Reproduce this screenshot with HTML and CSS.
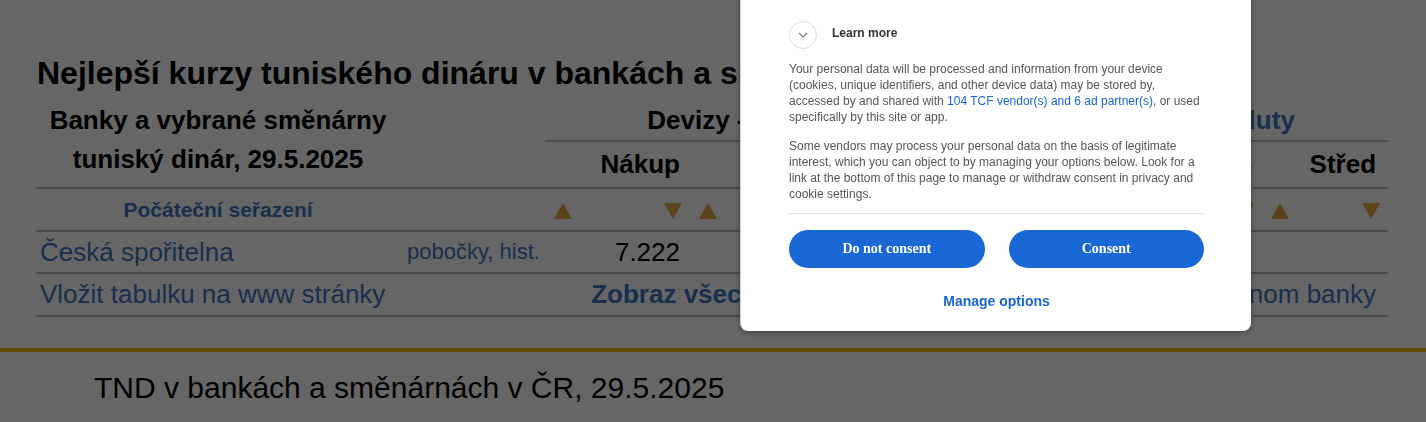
FILE: index.html
```html
<!DOCTYPE html>
<html lang="cs">
<head>
<meta charset="utf-8">
<title>Kurzy tuniského dináru</title>
<link rel="stylesheet" href="styles.css">
</head>
<body>
<main class="page">
  <div class="content">
    <h1 class="title">Nejlepší kurzy tuniského dináru v bankách a směnárnách</h1>
    <table class="rates">
      <colgroup>
        <col class="c-name"><col class="c-links">
        <col class="c-num"><col class="c-num"><col class="c-num"><col class="c-num">
        <col class="c-num5"><col class="c-num6">
      </colgroup>
      <thead>
        <tr class="h1row">
          <th class="bank-head" rowspan="2">Banky a vybrané směnárny<br>tuniský dinár, 29.5.2025</th>
          <th class="blank-head" rowspan="2"></th>
          <th class="group" colspan="4">Devizy - bezhotovostní převod</th>
          <th class="group" colspan="2"><a class="link-bold" href="#">Valuty</a></th>
        </tr>
        <tr class="h2row">
          <th class="num-head">Nákup</th>
          <th class="num-head">Prodej</th>
          <th class="num-head">Střed</th>
          <th class="num-head">Spread</th>
          <th class="num-head">Nákup</th>
          <th class="num-head">Střed</th>
        </tr>
      </thead>
      <tbody>
        <tr class="sort-row">
          <td class="sort-label"><a class="link-bold" href="#">Počáteční seřazení</a></td>
          <td></td>
          <td><div class="sorters"><svg class="tri" viewBox="0 0 18 16"><polygon points="9,0 18,16 0,16"/></svg><svg class="tri" viewBox="0 0 18 16"><polygon points="0,0 18,0 9,16"/></svg></div></td>
          <td><div class="sorters"><svg class="tri" viewBox="0 0 18 16"><polygon points="9,0 18,16 0,16"/></svg><svg class="tri" viewBox="0 0 18 16"><polygon points="0,0 18,0 9,16"/></svg></div></td>
          <td><div class="sorters"><svg class="tri" viewBox="0 0 18 16"><polygon points="9,0 18,16 0,16"/></svg><svg class="tri" viewBox="0 0 18 16"><polygon points="0,0 18,0 9,16"/></svg></div></td>
          <td><div class="sorters"><svg class="tri" viewBox="0 0 18 16"><polygon points="9,0 18,16 0,16"/></svg><svg class="tri" viewBox="0 0 18 16"><polygon points="0,0 18,0 9,16"/></svg></div></td>
          <td><div class="sorters"><svg class="tri" viewBox="0 0 18 16"><polygon points="9,0 18,16 0,16"/></svg><svg class="tri" viewBox="0 0 18 16"><polygon points="0,0 18,0 9,16"/></svg></div></td>
          <td><div class="sorters"><svg class="tri" viewBox="0 0 18 16"><polygon points="9,0 18,16 0,16"/></svg><svg class="tri" viewBox="0 0 18 16"><polygon points="0,0 18,0 9,16"/></svg></div></td>
        </tr>
        <tr class="data-row">
          <td class="bank"><a class="link" href="#">Česká spořitelna</a></td>
          <td class="bank-links"><a class="link" href="#">pobočky</a>, <a class="link" href="#">hist.</a></td>
          <td class="num">7.222</td>
          <td class="num">7.664</td>
          <td class="num">7.443</td>
          <td class="num"></td>
          <td class="num"></td>
          <td class="num"></td>
        </tr>
        <tr class="foot-row">
          <td class="bank" colspan="2"><a class="link" href="#">Vložit tabulku na www stránky</a></td>
          <td class="show-all" colspan="3"><a class="link-bold" href="#">Zobraz všechny směnárny</a></td>
          <td class="by-name" colspan="3"><a class="link" href="#">Seřadit podle jménom banky</a></td>
        </tr>
      </tbody>
    </table>
  </div>
  <hr class="gold">
  <h2 class="subtitle">TND v bankách a směnárnách v ČR, 29.5.2025</h2>
</main>

<div class="overlay"></div>

<section class="consent">
  <div class="learn">
    <span class="chevron"><svg viewBox="0 0 10 6" width="10" height="6"><polyline points="1,1 5,5 9,1"/></svg></span>
    <span class="learn-label">Learn more</span>
  </div>
  <p class="consent-text">Your personal data will be processed and information from your device (cookies, unique identifiers, and other device data) may be stored by, accessed by and shared with <a href="#" class="consent-link">104 TCF vendor(s) and 6 ad partner(s)</a>, or used specifically by this site or app.</p>
  <p class="consent-text second">Some vendors may process your personal data on the basis of legitimate interest, which you can object to by managing your options below. Look for a link at the bottom of this page to manage or withdraw consent in privacy and cookie settings.</p>
  <div class="divider"></div>
  <div class="buttons">
    <button class="btn">Do not consent</button>
    <button class="btn">Consent</button>
  </div>
  <a href="#" class="manage">Manage options</a>
</section>
</body>
</html>
```
FILE: styles.css
```css
html, body {
  margin: 0;
  padding: 0;
  background: #ffffff;
  font-family: "Liberation Sans", Arial, sans-serif;
  color: #000;
  overflow: hidden;
}

.page {
  width: 1426px;
}

.content {
  padding: 0 38px 0 36px;
}

.title {
  margin: 55px 0 0 1px;
  font-size: 32px;
  line-height: 36px;
  font-weight: bold;
  white-space: nowrap;
  height: 45px;
}

a { text-decoration: none; }

.link { color: #3e78c2; }
.link-bold { color: #3e78c2; font-weight: bold; }

.rates {
  width: 1352px;
  table-layout: fixed;
  border-collapse: separate;
  border-spacing: 0;
  font-size: 26px;
}

.c-name { width: 364px; }
.c-links { width: 145px; }
.c-num { width: 145px; }
.c-num5 { width: 137px; }
.c-num6 { width: 126px; }

.rates th, .rates td {
  padding: 0;
  white-space: nowrap;
  overflow: hidden;
}

.rates th {
  font-weight: bold;
}

.h1row th.group {
  height: 40px;
  border-bottom: 2px solid #bbbbbb;
  text-align: center;
  vertical-align: middle;
}

.bank-head {
  line-height: 39px;
  text-align: center;
  vertical-align: middle;
  border-bottom: 2px solid #bbbbbb;
  padding-bottom: 7px !important;
}

.blank-head {
  border-bottom: 2px solid #bbbbbb;
}

.num-head {
  height: 45px;
  text-align: right;
  padding-right: 10px !important;
  border-bottom: 2px solid #bbbbbb;
}

.num-head:last-child {
  padding-right: 12px !important;
}

.sort-row td {
  height: 41px;
  border-bottom: 2px solid #bbbbbb;
  vertical-align: middle;
}

.sort-label {
  text-align: center;
  font-size: 21px;
}

.sorters {
  display: flex;
  justify-content: space-between;
  align-items: center;
  padding: 2px 8px 0 9px;
}

.tri {
  width: 18px;
  height: 16px;
  fill: #e2ad45;
}

.data-row td {
  height: 40px;
  border-bottom: 2px solid #bbbbbb;
  vertical-align: middle;
}

.bank {
  padding-left: 4px !important;
}

.bank-links {
  font-size: 22px;
  padding-left: 7px !important;
  color: #3e78c2;
}

.num {
  text-align: right;
  padding-right: 10px !important;
}

.foot-row td {
  height: 41px;
  border-bottom: 2px solid #bbbbbb;
  vertical-align: middle;
}

.show-all {
  text-align: center;
  padding-right: 16px !important;
}

.by-name {
  text-align: right;
  padding-right: 12px !important;
}

.gold {
  margin: 31px 0 0;
  border: 0;
  height: 4px;
  background: #ffb722;
}

.subtitle {
  margin: 21px 0 0 94px;
  font-size: 30px;
  line-height: 30px;
  font-weight: normal;
  white-space: nowrap;
}

.overlay {
  position: fixed;
  inset: 0;
  background: rgba(0, 0, 0, 0.6);
}

.consent {
  position: fixed;
  top: -12px;
  left: 740px;
  width: 511px;
  box-sizing: border-box;
  padding: 33px 47px 22px 48px;
  background: #ffffff;
  border-radius: 8px;
  border-left: 1px solid #cfcfcf;
  box-shadow: 0 2px 6px rgba(0, 0, 0, 0.35);
  font-family: "Liberation Sans", Arial, sans-serif;
}

.learn {
  display: flex;
  align-items: center;
  gap: 15px;
  height: 28px;
}

.chevron {
  width: 26px;
  height: 26px;
  border: 1px solid #dddddd;
  border-radius: 50%;
  display: flex;
  align-items: center;
  justify-content: center;
}

.chevron svg {
  fill: none;
  stroke: #777777;
  stroke-width: 1.1;
}

.learn-label {
  font-size: 12px;
  font-weight: bold;
  color: #333333;
  padding-bottom: 4px;
}

.consent-text {
  margin: 12px 0 0;
  font-size: 12px;
  line-height: 16px;
  color: #555555;
}

.consent-text.second {
  margin-top: 13px;
}

.consent-link {
  color: #1a66d0;
}

.divider {
  margin-top: 11px;
  height: 1px;
  background: #dddddd;
}

.buttons {
  margin-top: 16px;
  display: grid;
  grid-template-columns: 1fr 1fr;
  gap: 24px;
}

.btn {
  height: 38px;
  border: 0;
  border-radius: 19px;
  background: #1a68d5;
  color: #ffffff;
  font-family: "Liberation Serif", "Times New Roman", serif;
  font-weight: bold;
  font-size: 14px;
}

.manage {
  display: block;
  margin-top: 25px;
  text-align: center;
  font-size: 14px;
  line-height: 16px;
  font-weight: bold;
  color: #1a66d0;
}
```
